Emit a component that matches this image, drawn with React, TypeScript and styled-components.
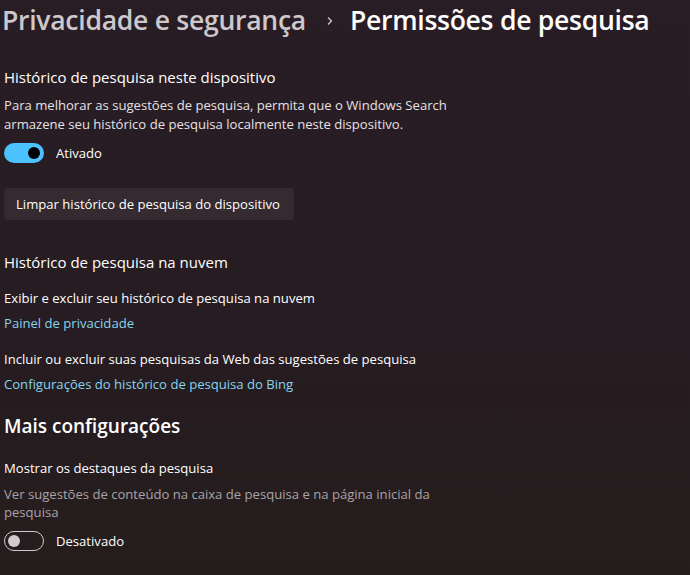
import React from "react";
import styled, { createGlobalStyle } from "styled-components";

const GlobalStyle = createGlobalStyle`
  html, body {
    margin: 0;
    padding: 0;
    height: 100%;
    background: linear-gradient(180deg, #291d25 0%, #261c21 60%, #251d1d 100%);
  }
  body {
    font-family: "Open Sans", "Noto Sans", sans-serif;
    color: #ffffff;
    -webkit-font-smoothing: antialiased;
  }
`;

const Page = styled.main`
  width: 690px;
  height: 575px;
  overflow: hidden;
  padding-left: 4px;
  box-sizing: border-box;
  display: flex;
  flex-direction: column;
`;

const Breadcrumb = styled.header`
  display: flex;
  align-items: center;
  gap: 14px;
  height: 40px;
  margin-left: -2px;
  font-size: 26.6px;
  font-weight: 600;
  white-space: nowrap;
`;

const Crumb = styled.span<{ $current?: boolean }>`
  color: ${(p) => (p.$current ? "#ffffff" : "#cdc8cb")};
  letter-spacing: -0.3px;
`;

const Chevron = styled.svg`
  width: 12px;
  height: 12px;
  margin: 2px 0 0 4px;
`;

const Section = styled.section<{ $top: number }>`
  display: flex;
  flex-direction: column;
  align-items: flex-start;
  margin-top: ${(p) => p.$top}px;
`;

const SubTitle = styled.h2`
  margin: 0;
  font-size: 15px;
  font-weight: 400;
  line-height: 20px;
  color: #ffffff;
`;

const Title = styled.h1`
  margin: 0 0 3px;
  font-size: 19px;
  font-weight: 600;
  line-height: 26px;
  color: #ffffff;
`;

const Description = styled.p<{ $muted?: boolean }>`
  margin: ${(p) => (p.$muted ? 7 : 9)}px 0 0;
  font-size: 13.1px;
  line-height: ${(p) => (p.$muted ? 18 : 19)}px;
  color: ${(p) => (p.$muted ? "#a9a3a6" : "#e6e1e4")};
  max-width: 460px;
`;

const ItemLabel = styled.p`
  margin: 17px 0 0;
  font-size: 13.1px;
  line-height: 19px;
  color: #ffffff;
`;

const Link = styled.a`
  margin-top: 6px;
  font-size: 13.1px;
  line-height: 19px;
  color: #88d3ee;
  text-decoration: none;
  cursor: pointer;
`;

const ToggleRow = styled.label<{ $top: number }>`
  display: flex;
  align-items: center;
  gap: 12px;
  height: 20px;
  margin-top: ${(p) => p.$top}px;
  font-size: 13.1px;
  color: #ffffff;
`;

const Track = styled.span<{ $on?: boolean }>`
  display: flex;
  align-items: center;
  justify-content: ${(p) => (p.$on ? "flex-end" : "flex-start")};
  box-sizing: border-box;
  width: 40px;
  height: 20px;
  border-radius: 10px;
  padding: 0 ${(p) => (p.$on ? 4 : 3)}px;
  background: ${(p) => (p.$on ? "#4cc2ff" : "transparent")};
  border: ${(p) => (p.$on ? "none" : "1px solid #cfcacc")};
`;

const Knob = styled.span<{ $on?: boolean }>`
  width: 12px;
  height: 12px;
  border-radius: 50%;
  background: ${(p) => (p.$on ? "#000000" : "#d0cbce")};
`;

const Button = styled.button`
  height: 32px;
  padding: 0 14px 0 12px;
  border: none;
  border-radius: 4px;
  background: #342a30;
  color: #ffffff;
  font-family: inherit;
  font-size: 13.1px;
`;

const Toggle = ({ on, label, top }: { on?: boolean; label: string; top: number }) => (
  <ToggleRow $top={top}>
    <Track $on={on}>
      <Knob $on={on} />
    </Track>
    {label}
  </ToggleRow>
);

export default function App() {
  return (
    <>
      <GlobalStyle />
      <Page>
        <Breadcrumb>
          <Crumb>Privacidade e segurança</Crumb>
          <Chevron viewBox="0 0 12 12">
            <path d="M4 2.5 L7.5 6 L4 9.5" fill="none" stroke="#cdc8cb" strokeWidth="1.3" />
          </Chevron>
          <Crumb $current>Permissões de pesquisa</Crumb>
        </Breadcrumb>

        <Section $top={27}>
          <SubTitle>Histórico de pesquisa neste dispositivo</SubTitle>
          <Description>
            Para melhorar as sugestões de pesquisa, permita que o Windows Search
            armazene seu histórico de pesquisa localmente neste dispositivo.
          </Description>
        </Section>
        <Toggle on label="Ativado" top={9} />
        <Section $top={25}>
          <Button>Limpar histórico de pesquisa do dispositivo</Button>
        </Section>

        <Section $top={32}>
          <SubTitle>Histórico de pesquisa na nuvem</SubTitle>
          <ItemLabel>Exibir e excluir seu histórico de pesquisa na nuvem</ItemLabel>
          <Link>Painel de privacidade</Link>
          <ItemLabel>Incluir ou excluir suas pesquisas da Web das sugestões de pesquisa</ItemLabel>
          <Link>Configurações do histórico de pesquisa do Bing</Link>
        </Section>

        <Section $top={19}>
          <Title>Mais configurações</Title>
          <ItemLabel>Mostrar os destaques da pesquisa</ItemLabel>
          <Description $muted>
            Ver sugestões de conteúdo na caixa de pesquisa e na página inicial da
            pesquisa
          </Description>
        </Section>
        <Toggle label="Desativado" top={10} />
      </Page>
    </>
  );
}
